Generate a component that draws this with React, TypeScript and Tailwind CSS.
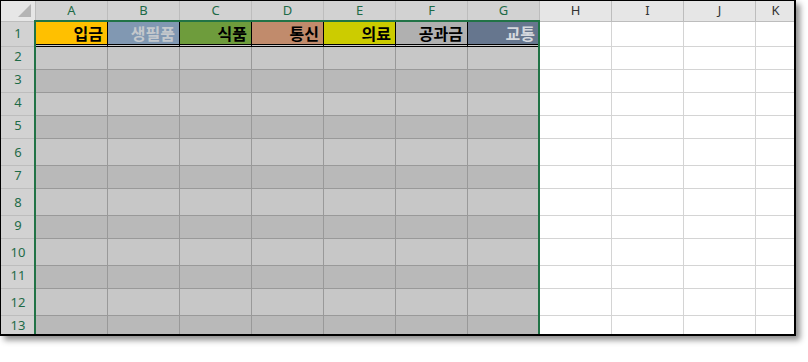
import React from 'react';

const cols = ['A', 'B', 'C', 'D', 'E', 'F', 'G', 'H', 'I', 'J', 'K'];

// header row of the budget sheet, one fill per category
const categories = [
  { label: '입금', bg: 'bg-[#ffc000]', text: 'text-black' },
  { label: '생필품', bg: 'bg-[#8198b2]', text: 'text-[#c4c8cc]' },
  { label: '식품', bg: 'bg-[#6e9c3c]', text: 'text-black' },
  { label: '통신', bg: 'bg-[#c18b6c]', text: 'text-black' },
  { label: '의료', bg: 'bg-[#cccc00]', text: 'text-black' },
  { label: '공과금', bg: 'bg-[#b0b0b0]', text: 'text-black' },
  { label: '교통', bg: 'bg-[#66768e]', text: 'text-[#d6d9de]' },
];

const rows = [2, 3, 4, 5, 6, 7, 8, 9, 10, 11, 12, 13];

const App: React.FC = () => {
  return (
    <div className="w-[808px] h-[362px] bg-white">
      <div className="relative w-[796px] h-[336px] overflow-hidden border-t border-l border-r-2 border-b-2 border-black shadow-[4px_4px_6px_rgba(0,0,0,0.45)]">
        <div className="grid grid-cols-[35px_repeat(10,72px)_40px] grid-rows-[21px_25px_23px_23px_23px_23px_27px_23px_27px_23px_27px_23px_27px_23px] font-['Noto_Sans',sans-serif]">
          {/* corner */}
          <div className="relative bg-[#e6e6e6] border-r border-b border-[#bdbdbd]">
            <div className="absolute right-[4px] bottom-[4px] w-0 h-0 border-l-[13px] border-t-[13px] border-l-transparent border-t-transparent border-r-0 border-b-0 border-[#b4b4b4] [border-bottom:13px_solid_#b4b4b4]" />
          </div>

          {/* column letters */}
          {cols.map((c, i) => (
            <div
              key={c}
              className={
                i < 7
                  ? 'flex items-center justify-center bg-[#d2d2d2] border-r border-b border-[#bdbdbd] text-[13px] text-[#1e6b47]'
                  : 'flex items-center justify-center bg-[#e6e6e6] border-r border-b border-[#bdbdbd] text-[13px] text-[#333]'
              }
            >
              {c}
            </div>
          ))}

          {/* row 1: category titles */}
          <div className="flex items-end justify-center pb-[3px] bg-[#d2d2d2] border-r border-b border-[#bdbdbd] text-[13px] text-[#1e6b47]">
            1
          </div>
          {categories.map((cat) => (
            <div
              key={cat.label}
              className="border-r border-black border-b-[3px] [border-bottom-style:double] bg-[#c8c8c8]"
            >
              <div
                className={`h-full flex items-center justify-end pr-[4px] pb-[1px] ${cat.bg} ${cat.text} text-[16px] font-bold font-['Noto_Sans_CJK_KR',sans-serif]`}
              >
                {cat.label}
              </div>
            </div>
          ))}
          {cols.slice(7).map((c) => (
            <div key={c} className="border-r border-b border-[#d4d4d4] bg-white" />
          ))}

          {/* rows 2-13: shaded body on A-G, empty sheet beyond */}
          {rows.map((r) => (
            <React.Fragment key={r}>
              <div className="flex items-end justify-center pb-[3px] bg-[#d2d2d2] border-r border-b border-[#bdbdbd] text-[13px] text-[#1e6b47]">
                {r}
              </div>
              {cols.slice(0, 7).map((c) => (
                <div
                  key={c}
                  className={
                    r % 2 === 0
                      ? 'bg-[#c7c7c7] border-r border-b border-[#999999]'
                      : 'bg-[#b9b9b9] border-r border-b border-[#999999]'
                  }
                />
              ))}
              {cols.slice(7).map((c) => (
                <div key={c} className="bg-white border-r border-b border-[#d4d4d4]" />
              ))}
            </React.Fragment>
          ))}
        </div>

        {/* selection outline around A1:G13 */}
        <div className="absolute left-[33px] top-[19px] w-[506px] h-[340px] border-2 border-[#217346] pointer-events-none" />
      </div>
    </div>
  );
};

export default App;
